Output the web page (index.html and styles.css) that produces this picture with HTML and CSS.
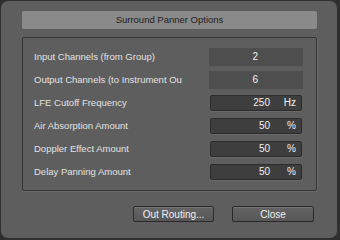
FILE: index.html
```html
<!DOCTYPE html>
<html lang="en">
<head>
  <meta charset="UTF-8">
  <title>Surround Panner Options</title>
  <link rel="stylesheet" href="styles.css">
</head>
<body>

  <div class="window">
    <div class="title">Surround Panner Options</div>

    <!-- options -->
    <div class="panel">
      <div class="row">
        <span class="label">Input Channels (from Group)</span>
        <span class="value plain"><span class="num">2</span></span>
      </div>
      <div class="row">
        <span class="label">Output Channels (to Instrument Output)</span>
        <span class="value plain"><span class="num">6</span></span>
      </div>
      <div class="row">
        <span class="label">LFE Cutoff Frequency</span>
        <span class="value"><span class="num">250</span><span class="unit">Hz</span></span>
      </div>
      <div class="row">
        <span class="label">Air Absorption Amount</span>
        <span class="value"><span class="num">50</span><span class="unit">%</span></span>
      </div>
      <div class="row">
        <span class="label">Doppler Effect Amount</span>
        <span class="value"><span class="num">50</span><span class="unit">%</span></span>
      </div>
      <div class="row">
        <span class="label">Delay Panning Amount</span>
        <span class="value"><span class="num">50</span><span class="unit">%</span></span>
      </div>
    </div>

    <div class="buttons">
      <button class="btn btn-routing">Out Routing...</button>
      <button class="btn btn-close">Close</button>
    </div>
  </div>

</body>
</html>
```

FILE: styles.css
```css
body {
  margin: 0;
  background: #2f2f2f;
  font-family: "Liberation Sans", Arial, sans-serif;
  font-size: 10px;
}
.window {
  margin: 1px 3px 2px 1px;
  height: 237px;
  box-sizing: border-box;
  padding: 10px 20px 0 21px;
  background: #5e5e5e;
  border-radius: 7px;
}
.title {
  height: 18px;
  line-height: 18px;
  background: #8a8a8a;
  border-radius: 2px;
  text-align: center;
  color: #1e1e1e;
  font-size: 9.5px;
}
.panel {
  margin-top: 8px;
  height: 154px;
  box-sizing: border-box;
  padding: 7px 13px 0 11px;
  border: 1px solid #353535;
  border-radius: 2px;
  box-shadow: 1px 1px 0 #6a6a6a;
}
.row {
  display: grid;
  grid-template-columns: 1fr 94px;
  align-items: center;
  height: 23px;
}
.label {
  width: 148px;
  overflow: hidden;
  white-space: nowrap;
  font-size: 9.5px;
  color: #e2e2e2;
}
.value {
  display: flex;
  align-items: center;
  height: 16px;
  margin: 0 1px;
  box-sizing: border-box;
  background: #3e3e3e;
  border: 1px solid #2c2c2c;
  border-radius: 2px;
  box-shadow: 0 1px 0 #6a6a6a;
  color: #f0f0f0;
}
.value .num {
  flex: 1;
  text-align: right;
}
.value .unit {
  width: 26px;
  padding-right: 5px;
  text-align: right;
}
.value.plain {
  height: 18px;
  margin: 0;
  background: #4e4e4e;
  border: none;
  border-radius: 0;
  box-shadow: none;
  padding-right: 45px;
}
.buttons {
  display: flex;
  justify-content: flex-end;
  gap: 18px;
  margin-top: 15px;
  padding-right: 3px;
}
.btn {
  height: 16px;
  padding: 0;
  font-family: inherit;
  font-size: 10px;
  color: #f0f0f0;
  background: linear-gradient(#646464, #575757);
  border: 1px solid #2a2a2a;
  border-radius: 2px;
  box-shadow: inset 0 1px 0 #757575;
}
.btn-routing {
  width: 81px;
}
.btn-close {
  width: 82px;
}
```
